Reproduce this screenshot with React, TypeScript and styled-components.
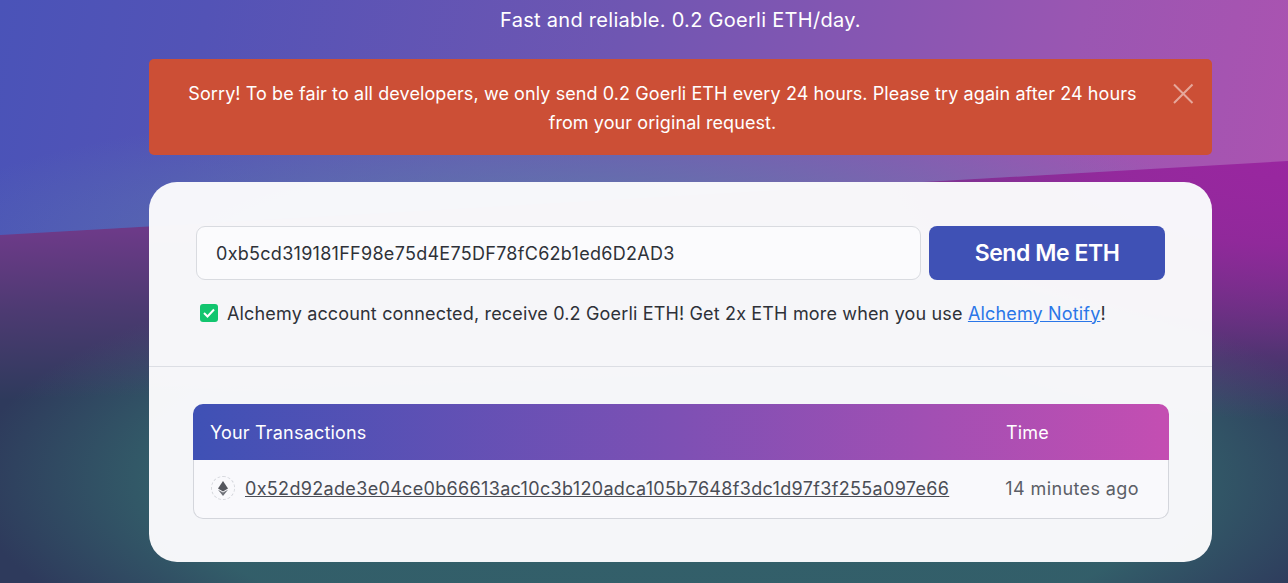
import React from "react";
import styled, { createGlobalStyle } from "styled-components";

const Global = createGlobalStyle`
  html, body { margin: 0; padding: 0; height: 583px; overflow: hidden; }
  body { font-family: "Inter", "Liberation Sans", sans-serif; }
`;

const Page = styled.div`
  position: relative;
  width: 1288px;
  height: 583px;
  overflow: hidden;
  background:
    radial-gradient(ellipse 520px 270px at 1288px 150px, #9a26a0 0%, rgba(154,38,160,0.85) 35%, rgba(154,38,160,0) 100%),
    linear-gradient(178deg, #6c3a88 235px, rgba(108,58,136,0.5) 310px, rgba(108,58,136,0) 400px),
    radial-gradient(ellipse 700px 240px at 670px 480px, #33606a 0%, rgba(51,96,106,0.95) 72%, rgba(51,96,106,0) 100%),
    #2e3a5c;
  &::before {
    content: "";
    position: absolute;
    inset: 0;
    clip-path: polygon(0 0, 100% 0, 100% 161px, 0 235px);
    background:
      radial-gradient(ellipse 680px 140px at 580px 240px, rgba(92,128,170,0.95) 0%, rgba(92,128,170,0) 100%),
      linear-gradient(100deg, #4a53b8 0%, #5353b6 15%, #6f56b2 45%, #9a56b2 78%, #b052b0 100%);
  }
`;

const Column = styled.main`
  position: relative;
  width: 1063px;
  margin-left: 149px;
  display: flex;
  flex-direction: column;
  align-items: stretch;
`;

const Tagline = styled.p`
  margin: 0;
  height: 59px;
  padding-top: 7px;
  box-sizing: border-box;
  text-align: center;
  color: #fff;
  font-size: 20px;
  line-height: 26px;
  letter-spacing: 0.29px;
`;

const Alert = styled.div`
  position: relative;
  height: 96px;
  box-sizing: border-box;
  padding: 20px 70px 0 34px;
  margin-bottom: 27px;
  background: #cc4f36;
  border-radius: 5px;
  color: #fff;
  font-size: 18px;
  line-height: 29px;
  letter-spacing: 0.09px;
  text-align: center;
`;

const Close = styled.button`
  position: absolute;
  top: 24px;
  right: 18px;
  width: 22px;
  height: 22px;
  padding: 0;
  border: 0;
  background: none;
  color: rgba(255, 255, 255, 0.5);
  display: flex;
`;

const Card = styled.section`
  height: 380px;
  background: rgba(249, 249, 251, 0.985);
  border-radius: 28px;
  display: flex;
  flex-direction: column;
`;

const FormArea = styled.div`
  height: 185px;
  box-sizing: border-box;
  padding: 44px 47px 0;
  border-bottom: 1px solid #dcdee4;
`;

const FormRow = styled.div`
  display: flex;
  gap: 8px;
`;

const AddressInput = styled.div`
  width: 725px;
  height: 54px;
  box-sizing: border-box;
  padding-left: 19px;
  display: flex;
  align-items: center;
  background: #fbfbfd;
  border: 1px solid #d9dbe0;
  border-radius: 9px;
  color: #2e3138;
  font-size: 18px;
  letter-spacing: 0.28px;
`;

const SendButton = styled.button`
  width: 236px;
  height: 54px;
  border: 0;
  border-radius: 8px;
  background: #3f51b5;
  color: #fff;
  font-family: inherit;
  font-size: 23px;
  font-weight: 600;
  letter-spacing: -0.45px;
`;

const Notice = styled.div`
  margin: 22px 0 0 4px;
  display: flex;
  align-items: center;
  gap: 9px;
  height: 22px;
  color: #2e3138;
  font-size: 18px;
  letter-spacing: 0.16px;
`;

const Tick = styled.span`
  width: 18px;
  height: 18px;
  border-radius: 3px;
  background: #12c56f;
  display: flex;
  align-items: center;
  justify-content: center;
  flex: none;
`;

const NotifyLink = styled.a`
  color: #2a76e8;
  text-decoration: underline;
`;

const TableArea = styled.div`
  padding: 37px 43px 0 44px;
`;

const TableHead = styled.div`
  height: 56px;
  display: flex;
  align-items: center;
  justify-content: space-between;
  padding: 0 120px 0 17px;
  border-radius: 10px 10px 0 0;
  color: #fff;
  font-size: 18px;
  letter-spacing: 0.19px;
  background: linear-gradient(90deg, #3f51b5 0%, #7e50b4 50%, #c44eb2 100%);
`;

const TableRow = styled.div`
  height: 59px;
  box-sizing: border-box;
  display: flex;
  align-items: center;
  padding: 0 29px 2px 17px;
  background: #f9f9fc;
  border: 1px solid #d4d6dc;
  border-top: 0;
  border-radius: 0 0 10px 10px;
  color: #4a4d55;
  font-size: 18px;
`;

const EthBadge = styled.span`
  width: 24px;
  height: 24px;
  box-sizing: border-box;
  border: 1px dashed #d6d8dd;
  border-radius: 50%;
  display: flex;
  align-items: center;
  justify-content: center;
  flex: none;
  margin-right: 10px;
`;

const TxLink = styled.a`
  color: #4a4d55;
  text-decoration: underline;
  letter-spacing: 0.33px;
  flex: 1;
`;

const Ago = styled.span`
  color: #5b5e66;
  letter-spacing: 0.4px;
`;

export default function App() {
  return (
    <Page>
      <Global />
      <Column>
        <Tagline>Fast and reliable. 0.2 Goerli ETH/day.</Tagline>
        <Alert>
          Sorry! To be fair to all developers, we only send 0.2 Goerli ETH every 24 hours. Please try again after 24 hours from your original request.
          <Close aria-label="Close">
            <svg width="22" height="22" viewBox="0 0 22 22" fill="none" stroke="currentColor" strokeWidth="2">
              <path d="M2 1.5 L20.5 20 M20.5 1.5 L2 20" />
            </svg>
          </Close>
        </Alert>
        <Card>
          <FormArea>
            <FormRow>
              <AddressInput>0xb5cd319181FF98e75d4E75DF78fC62b1ed6D2AD3</AddressInput>
              <SendButton>Send Me ETH</SendButton>
            </FormRow>
            <Notice>
              <Tick>
                <svg width="12" height="10" viewBox="0 0 12 10" fill="none" stroke="#fff" strokeWidth="2">
                  <path d="M1 5 L4.5 8.5 L11 1.5" />
                </svg>
              </Tick>
              <span>
                Alchemy account connected, receive 0.2 Goerli ETH! Get 2x ETH more when you use{" "}
                <NotifyLink href="#">Alchemy Notify</NotifyLink>!
              </span>
            </Notice>
          </FormArea>
          <TableArea>
            <div>
              <TableHead>
                <span>Your Transactions</span>
                <span>Time</span>
              </TableHead>
              <TableRow>
                <EthBadge>
                  <svg width="10" height="15" viewBox="0 0 10 15">
                    <path d="M5 0 L10 7.6 L5 10.4 L0 7.6 Z" fill="#55575e" />
                    <path d="M0 8.8 L5 11.6 L10 8.8 L5 15 Z" fill="#6f7178" />
                  </svg>
                </EthBadge>
                <TxLink href="#">0x52d92ade3e04ce0b66613ac10c3b120adca105b7648f3dc1d97f3f255a097e66</TxLink>
                <Ago>14 minutes ago</Ago>
              </TableRow>
            </div>
          </TableArea>
        </Card>
      </Column>
    </Page>
  );
}
